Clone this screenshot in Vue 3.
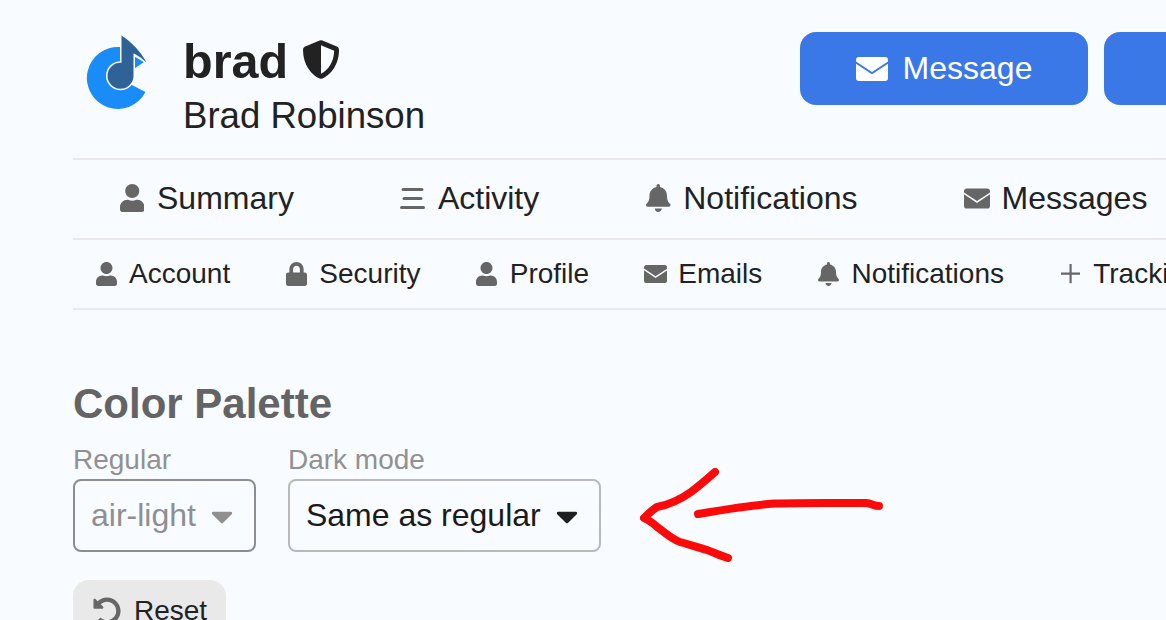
<script setup>
const icons = {
  user: { vb: '0 0 448 512', d: 'M224 256c70.7 0 128-57.3 128-128S294.7 0 224 0 96 57.3 96 128s57.3 128 128 128zm89.6 32h-16.7c-22.2 10.2-46.9 16-72.9 16s-50.6-5.8-72.9-16h-16.7C60.2 288 0 348.2 0 422.4V464c0 26.5 21.5 48 48 48h352c26.5 0 48-21.5 48-48v-41.6c0-74.2-60.2-134.4-134.4-134.4z' },
  bars: { vb: '0 0 25 21', d: 'M3 0h19a1.5 1.5 0 0 1 0 3H3a1.5 1.5 0 0 1 0-3zM4 9h17a1.5 1.5 0 0 1 0 3H4a1.5 1.5 0 0 1 0-3zM1.5 18h22a1.5 1.5 0 0 1 0 3h-22a1.5 1.5 0 0 1 0-3z' },
  bell: { vb: '0 0 448 512', d: 'M224 512c35.32 0 63.97-28.65 63.97-64H160.03c0 35.35 28.65 64 63.97 64zm215.39-149.71c-19.32-20.76-55.47-51.99-55.47-154.29 0-77.7-54.48-139.9-127.94-155.16V32c0-17.67-14.32-32-31.98-32s-31.98 14.33-31.98 32v20.84C118.56 68.1 64.08 130.3 64.08 208c0 102.3-36.15 133.53-55.47 154.29-6 6.45-8.66 14.16-8.61 21.71.11 16.4 12.98 32 32.1 32h383.8c19.12 0 32-15.6 32.1-32 .05-7.55-2.61-15.27-8.61-21.71z' },
  envelope: { vb: '0 0 27 21', d: 'M3 0h21a3 3 0 0 1 3 3v1.2L13.500 13 0 4.200V3a3 3 0 0 1 3-3zM0 6.200l13.500 9L27 6.200V18a3 3 0 0 1-3 3H3a3 3 0 0 1-3-3z' },
  lock: { vb: '0 0 448 512', d: 'M400 224h-24v-72C376 68.2 307.800 0 224 0S72 68.200 72 152v72H48c-26.500 0-48 21.500-48 48v192c0 26.500 21.500 48 48 48h352c26.500 0 48-21.500 48-48V272c0-26.500-21.500-48-48-48zm-104 0H152v-72c0-39.700 32.300-72 72-72s72 32.300 72 72v72z' },
  plus: { vb: '0 0 20 20', d: 'M8.900 0h2.200v8.900H20v2.200h-8.900V20H8.900v-8.900H0V8.900h8.900z' }
}
const mainTabs = [
  { label: 'Summary', icon: 'user' },
  { label: 'Activity', icon: 'bars' },
  { label: 'Notifications', icon: 'bell' },
  { label: 'Messages', icon: 'envelope' }
]
const subTabs = [
  { label: 'Account', icon: 'user' },
  { label: 'Security', icon: 'lock' },
  { label: 'Profile', icon: 'user' },
  { label: 'Emails', icon: 'envelope' },
  { label: 'Notifications', icon: 'bell' },
  { label: 'Tracking', icon: 'plus' }
]
const caret = 'M31.3 192h257.3c17.8 0 26.7 21.5 14.1 34.1L174.1 354.8c-7.8 7.8-20.5 7.8-28.3 0L17.2 226.1C4.6 213.5 13.5 192 31.3 192z'
</script>

<template>
  <div class="page">
    <header class="head">
      <div class="identity">
        <svg class="logo" viewBox="85 34 68 78" aria-hidden="true">
          <path fill="#1a8cf7" d="M120 47A31 31 0 1 0 145.500 92L130 84V60L120 60z" />
          <path fill="#1a8cf7" d="M134.500 56.500L144 62L134.500 68.500z" />
          <path class="note" d="M121.500 35.500C130 41 140 50 146.500 62.500C141 57.500 137 55 133.500 53.500V76A13 13 0 1 1 121.500 62.800z" />
        </svg>
        <div class="names">
          <div class="username">
            <span>brad</span>
            <svg class="shield" viewBox="16 0 480 512" aria-hidden="true"><path d="M466.500 83.700l-192-80a48.150 48.150 0 0 0-36.900 0l-192 80C27.700 91.100 16 108.600 16 128c0 198.500 114.500 335.700 221.500 380.300 11.800 4.900 25.100 4.900 36.900 0C360.100 472.600 496 349.300 496 128c0-19.400-11.700-36.900-29.500-44.300zM256.100 446.300l-.1-381 175.900 73.300c-3.300 151.400-82.100 261.100-175.800 307.700z" /></svg>
          </div>
          <div class="fullname">Brad Robinson</div>
        </div>
      </div>
      <div class="actions">
        <button class="btn-primary">
          <svg class="btn-icon" viewBox="0 0 32 24" aria-hidden="true"><path d="M3 0h26a3 3 0 0 1 3 3v1.500L16 15 0 4.500V3a3 3 0 0 1 3-3zM0 6.800l16 10.500L32 6.800V21a3 3 0 0 1-3 3H3a3 3 0 0 1-3-3z" /></svg>
          <span>Message</span>
        </button>
        <button class="btn-primary btn-second"></button>
      </div>
    </header>

    <nav class="tabs main-tabs">
      <a v-for="t in mainTabs" :key="t.label" class="tab">
        <span class="slot"><svg :class="['ic', 'ic-' + t.icon]" :viewBox="icons[t.icon].vb" aria-hidden="true"><path :d="icons[t.icon].d" /></svg></span>
        <span>{{ t.label }}</span>
      </a>
    </nav>

    <nav class="tabs sub-tabs">
      <a v-for="t in subTabs" :key="t.label" class="tab">
        <span class="slot"><svg :class="['ic', 'ic-' + t.icon]" :viewBox="icons[t.icon].vb" aria-hidden="true"><path :d="icons[t.icon].d" /></svg></span>
        <span>{{ t.label }}</span>
      </a>
    </nav>

    <section class="palette">
      <h2>Color Palette</h2>
      <div class="selects">
        <div class="field">
          <label>Regular</label>
          <div class="select disabled">
            <span>air-light</span>
            <svg class="caret" viewBox="0 180 320 190" aria-hidden="true"><path :d="caret" /></svg>
          </div>
        </div>
        <div class="field">
          <label>Dark mode</label>
          <div class="select">
            <span>Same as regular</span>
            <svg class="caret" viewBox="0 180 320 190" aria-hidden="true"><path :d="caret" /></svg>
          </div>
        </div>
      </div>
      <button class="reset">
        <svg class="reset-icon" viewBox="0 0 512 512" aria-hidden="true"><path d="M255.545 8c-66.269.119-126.438 26.233-170.860 68.685L48.971 40.971C33.851 25.851 8 36.559 8 57.941V192c0 13.255 10.745 24 24 24h134.059c21.382 0 32.090-25.851 16.971-40.971l-41.750-41.750c30.864-28.899 70.801-44.907 113.230-45.273 92.398-.798 170.283 73.977 169.484 169.442C423.236 348.009 349.816 424 256 424c-41.127 0-79.997-14.678-110.630-41.556-4.743-4.161-11.906-3.908-16.368.553L89.340 422.659c-4.872 4.872-4.631 12.815.482 17.433C133.798 479.813 192.074 504 256 504c136.966 0 247.999-111.033 248-247.998C504.001 119.193 392.354 7.755 255.545 8z" /></svg>
        <span>Reset</span>
      </button>
    </section>

    <svg class="annotation" viewBox="0 0 1166 620" aria-hidden="true">
      <path d="M698 514C722 510 752 505 775 503.500C805 502.500 840 503 866 503C872 503.500 874 506 879 506" />
      <path d="M715 472C706 480 699 486 691 492C681 499 668 505 657 507C652 510 648 514 644 518C650 521 653 523 656 526C664 532 671 539 680 542C690 545 698 547 707 550C715 553 721 556 728 558" />
    </svg>
  </div>
</template>

<style>
html, body { margin: 0; background: #f8fbff; overflow: hidden; }
</style>

<style scoped>
.page {
  position: relative;
  width: 1166px;
  height: 620px;
  overflow: hidden;
  box-sizing: border-box;
  padding-left: 73px;
  background: #f8fbff;
  color: #222;
  font-family: "Liberation Sans", Arial, sans-serif;
}
.head {
  display: flex;
  height: 158px;
  border-bottom: 2px solid #e9e9e9;
  width: 1200px;
}
.identity {
  display: flex;
  width: 727px;
  flex: none;
  padding-top: 33px;
  box-sizing: border-box;
}
.logo {
  width: 68px;
  height: 78px;
  flex: none;
  margin-left: 12px;
  margin-top: 1px;
  margin-right: 30px;
}
.note {
  fill: #2f6398;
  stroke: #f8fbff;
  stroke-width: 3px;
  paint-order: stroke;
}
.username {
  display: flex;
  align-items: center;
  font-size: 48.500px;
  font-weight: 700;
  line-height: 56px;
}
.shield {
  height: 39px;
  width: 36px;
  margin-left: 15px;
  margin-top: -4px;
  fill: #222;
}
.fullname {
  font-size: 36.600px;
  line-height: 44px;
  margin-top: 5px;
}
.actions {
  display: flex;
  gap: 16px;
  padding-top: 32px;
  align-items: flex-start;
}
.btn-primary {
  display: flex;
  align-items: center;
  justify-content: center;
  gap: 15px;
  width: 288px;
  height: 73px;
  flex: none;
  padding: 0;
  border: 0;
  border-radius: 16px;
  background: #3b78e7;
  color: #fff;
  font: inherit;
  font-size: 32px;
}
.btn-icon {
  width: 32px;
  height: 24px;
  fill: #fff;
}
.tabs {
  display: flex;
  align-items: center;
  border-bottom: 2px solid #e9e9e9;
  white-space: nowrap;
  width: 1200px;
}
.tab {
  display: flex;
  align-items: center;
  flex: none;
}
.slot {
  display: flex;
  align-items: center;
  justify-content: center;
  flex: none;
}
.ic {
  height: 1em;
  fill: #666;
}
.ic-envelope, .ic-bars { height: .75em; }
.ic-plus { height: .8em; }
.main-tabs {
  height: 76px;
  padding-bottom: 2px;
  gap: 106px;
  padding-left: 46px;
  font-size: 32px;
}
.main-tabs .slot {
  width: 26px;
  margin-right: 12px;
  font-size: 28px;
}
.sub-tabs {
  height: 68px;
  gap: 54.200px;
  padding-left: 21px;
  font-size: 28px;
}
.sub-tabs .slot {
  width: 24px;
  margin-right: 11px;
  font-size: 24px;
}
.palette h2 {
  margin: 69px 0 0;
  font-size: 42px;
  line-height: 50px;
  font-weight: 700;
  color: #646464;
}
.selects {
  display: flex;
  gap: 32px;
  margin-top: 15px;
}
.field {
  display: flex;
  flex-direction: column;
}
.field label {
  font-size: 28px;
  line-height: 32px;
  color: #919191;
  margin-bottom: 3px;
}
.select {
  display: flex;
  align-items: center;
  gap: 15px;
  height: 73px;
  box-sizing: border-box;
  padding: 0 21px 0 16px;
  border: 2px solid #b9b9b9;
  border-radius: 8px;
  font-size: 32px;
  color: #1a1a1a;
  white-space: nowrap;
}
.select.disabled {
  border-color: #8d8d8d;
  color: #8f8f8f;
}
.caret {
  width: 22px;
  height: 13px;
  margin-top: 4px;
  fill: #1f1f1f;
}
.disabled .caret { fill: #8f8f8f; }
.reset {
  display: flex;
  align-items: center;
  gap: 13px;
  width: 153px;
  height: 62px;
  margin-top: 28px;
  padding: 0 0 0 20px;
  border: 0;
  border-radius: 16px;
  background: #e9e9e9;
  color: #222;
  font: inherit;
  font-size: 28px;
}
.reset-icon {
  width: 28px;
  height: 28px;
  fill: #666;
  flex: none;
}
.annotation {
  position: absolute;
  left: 0;
  top: 0;
  width: 1166px;
  height: 620px;
  pointer-events: none;
  fill: none;
  stroke: #fb0a0a;
  stroke-width: 8;
  stroke-linecap: round;
  stroke-linejoin: round;
  filter: blur(.5px);
}
</style>
